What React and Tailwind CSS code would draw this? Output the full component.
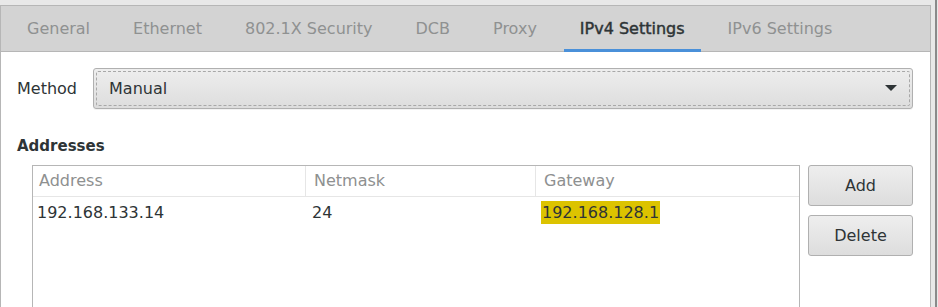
import React from "react";

const font = { fontFamily: '"DejaVu Sans", "Noto Sans", sans-serif' };

export default function App() {
  const tabs = ["General", "Ethernet", "802.1X Security", "DCB", "Proxy", "IPv4 Settings", "IPv6 Settings"];
  return (
    <div className="w-[938px] h-[307px] bg-[#e8e8e8] overflow-hidden flex leading-[20px]" style={font}>
      <div className="w-[931px] h-full pt-[5px] flex flex-col">
        <div className="flex-1 flex flex-col border border-[#b6b6b6] border-b-0 bg-white">
          {/* tab bar */}
          <div className="h-[46px] bg-[#d3d3d3] border-b border-[#b6b6b6] flex items-stretch gap-[11px] pl-[10px] shrink-0">
            {tabs.map((t) => {
              const active = t === "IPv4 Settings";
              return (
                <div
                  key={t}
                  className={
                    "px-[16px] flex items-center text-[16px] border-b-[3px] -mb-px pt-[2px] " +
                    (active
                      ? "border-[#4a90d9] text-[#2e3436] [-webkit-text-stroke:0.45px_#2e3436]"
                      : "border-transparent text-[#8f9191]")
                  }
                >
                  {t}
                </div>
              );
            })}
          </div>
          {/* content */}
          <div className="flex-1 px-[16px] pt-[16px] flex flex-col">
            <div className="flex items-center gap-[16px]">
              <span className="text-[16px] text-[#2e3436]">Method</span>
              <div className="w-[820px] h-[41px] rounded-[3px] border border-[#b0b0b0] bg-gradient-to-b from-[#eeeeee] to-[#dddddd] p-[2px] shadow-[0_1px_0_rgba(0,0,0,0.05)]">
                <div className="h-full border border-dashed border-[#a8a8a8] rounded-[2px] flex items-center justify-between pl-[12px] pr-[12px]">
                  <span className="text-[16px] text-[#2e3436]">Manual</span>
                  <svg width="12" height="7" viewBox="0 0 12 7">
                    <path d="M0 0 L12 0 L6 6 Z" fill="#2e3436" />
                  </svg>
                </div>
              </div>
            </div>
            <div className="mt-[27px] text-[15px] font-bold text-[#2e3436]">Addresses</div>
            <div className="mt-[9px] flex-1 flex gap-[8px] pl-[15px]">
              <div className="w-[768px] border border-[#b6b6b6] border-b-0 bg-white">
                <div className="flex h-[31px] border-b border-[#e6e6e6] text-[16px] text-[#8e9090]">
                  <div className="w-[273px] border-r border-[#e6e6e6] pl-[6px] flex items-center">Address</div>
                  <div className="w-[230px] border-r border-[#e6e6e6] pl-[8px] flex items-center">Netmask</div>
                  <div className="flex-1 pl-[8px] flex items-center">Gateway</div>
                </div>
                <div className="flex h-[32px] text-[16px] text-[#2e3436] items-center">
                  <div className="w-[273px] pl-[4px]">192.168.133.14</div>
                  <div className="w-[230px] pl-[6px]">24</div>
                  <div className="flex-1 pl-[5px]">
                    <span className="bg-[#dcc300] px-[1px] py-[2px]">192.168.128.1</span>
                  </div>
                </div>
              </div>
              <div className="flex flex-col gap-[9px]">
                <button className="w-[105px] h-[41px] rounded-[3px] border border-[#b0b0b0] bg-gradient-to-b from-[#eeeeee] to-[#dddddd] text-[16px] text-[#2e3436]">
                  Add
                </button>
                <button className="w-[105px] h-[41px] rounded-[3px] border border-[#b0b0b0] bg-gradient-to-b from-[#eeeeee] to-[#dddddd] text-[16px] text-[#2e3436]">
                  Delete
                </button>
              </div>
            </div>
          </div>
        </div>
      </div>
      <div className="w-[4px]" />
      <div className="w-[2px] bg-[#8a8a8a]" />
    </div>
  );
}
